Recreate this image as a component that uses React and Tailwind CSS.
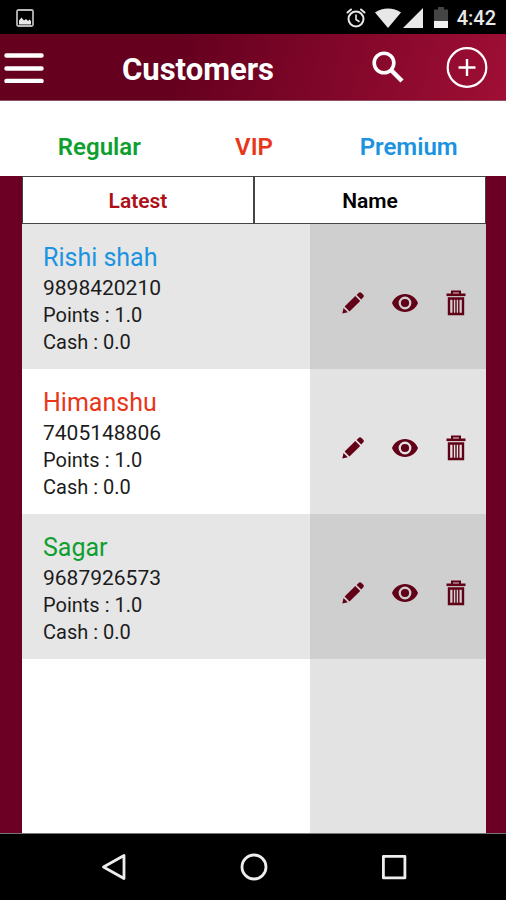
import React from 'react';

const customers = [
  { id: 1, name: 'Rishi shah', phone: '9898420210', points: '1.0', cash: '0.0', type: 'premium' },
  { id: 2, name: 'Himanshu', phone: '7405148806', points: '1.0', cash: '0.0', type: 'vip' },
  { id: 3, name: 'Sagar', phone: '9687926573', points: '1.0', cash: '0.0', type: 'regular' },
];

const typeColors = {
  regular: 'text-[#0f9f30]',
  vip: 'text-[#e8361a]',
  premium: 'text-[#1b93e0]',
};

const StatusBar = () => (
  <div className="flex h-[34px] shrink-0 items-center justify-between bg-black pl-4 pr-[10px] pt-px text-[#e8e8e8]">
    <svg className="h-[18px] w-[18px]" viewBox="0 0 18 18" fill="none">
      <rect x="1" y="1" width="16" height="16" rx="1.5" stroke="#b8b8b8" strokeWidth="1.8" />
      <path d="M3 15.500v-4l2.500-3 2.500 3 2-1.500 2 2 1.500-1.500L15 12v3.500z" fill="#e8e8e8" />
    </svg>
    <div className="flex items-center">
      <svg className="h-5 w-5" viewBox="0 0 20 20" fill="none" stroke="currentColor" strokeLinecap="round">
        <circle cx="10" cy="11" r="7.5" strokeWidth="2" />
        <path d="M1.5 4.5l3.5-3M18.5 4.5l-3.5-3" strokeWidth="2" />
        <path d="M10 7v4.5l3 2" strokeWidth="1.6" />
      </svg>
      <svg className="ml-[9px] h-5 w-[26px]" viewBox="0 0 26 20" fill="currentColor">
        <path d="M0 4.5C7.5-.8 18.5-.8 26 4.5L13 20z" />
      </svg>
      <svg className="ml-[2px] h-5 w-5" viewBox="0 0 20 20" fill="currentColor">
        <path d="M20 0v20H0z" />
      </svg>
      <svg className="ml-[11px] h-[21px] w-[14px]" viewBox="0 0 14 21">
        <path d="M0 2.5h4V0h6v2.5h4V14H0z" fill="#454545" />
        <path d="M0 14h14v7H0z" fill="#f0f0f0" />
      </svg>
      <span className="ml-[9px] text-[20px] leading-6 font-medium">4:42</span>
    </div>
  </div>
);

const Header = () => (
  <header className="flex h-[67px] shrink-0 items-center border-b border-[#8a5560] bg-linear-[105deg] from-[#65001f] from-35% to-[#a00e35] pl-1 pr-[18px] text-white">
    <button type="button" aria-label="Menu">
      <svg className="h-8 w-10" viewBox="0 0 40 32" stroke="currentColor" strokeWidth="4.5" strokeLinecap="round">
        <path d="M2.5 4.500h35M2.5 17.500h35M2.5 30h35" />
      </svg>
    </button>
    <h1 className="ml-[78px] flex-1 pt-[6px] text-[31px] leading-9 font-bold">Customers</h1>
    <button type="button" aria-label="Search">
      <svg className="h-8 w-8" viewBox="0 0 32 32" fill="none" stroke="currentColor">
        <circle cx="12" cy="12" r="9.8" strokeWidth="3.6" />
        <path d="M18.5 18.5L30 30" strokeWidth="4.5" />
      </svg>
    </button>
    <button type="button" aria-label="Add customer" className="ml-[42px]">
      <svg className="h-[42px] w-[42px]" viewBox="0 0 42 42" fill="none" stroke="currentColor">
        <circle cx="21" cy="21.500" r="19.3" strokeWidth="2.2" />
        <path d="M21 13v17M12.5 21.500h17" strokeWidth="2.4" />
      </svg>
    </button>
  </header>
);

const TypeTabs = () => (
  <nav className="flex h-[75px] shrink-0 items-end bg-white pl-[22px] pr-5 pb-[15px] text-[24px] leading-7 font-semibold">
    <button type="button" className={`flex-1 ${typeColors.regular}`}>Regular</button>
    <button type="button" className={`flex-1 ${typeColors.vip}`}>VIP</button>
    <button type="button" className={`flex-1 ${typeColors.premium}`}>Premium</button>
  </nav>
);

const SortTabs = () => (
  <div className="flex h-12 shrink-0 bg-white text-[21px] font-semibold">
    <button type="button" className="flex-1 border border-[#444] pt-1 text-[#ad1018]">Latest</button>
    <button type="button" className="flex-1 border border-[#444] pt-1 text-black">Name</button>
  </div>
);

const EditIcon = () => (
  <svg className="h-[22px] w-[22px]" viewBox="0 0 22 22" fill="currentColor">
    <path d="M.3 21.500l1.200-5.500 4.300 4.300z" />
    <path d="M2.600 14.500L13.300 4.100l4.900 4.900L7.500 19.400z" />
    <path d="M14.600 2.900L16.800.8q1.300-1 2.500 0l2 2q1.200 1.300 0 2.500l-2.100 2.200z" />
  </svg>
);

const ViewIcon = () => (
  <svg className="h-[18px] w-[26px]" viewBox="0 0 26 18" fill="currentColor">
    <path
      fillRule="evenodd"
      d="M13 0C7 0 2.2 3.7 0 9c2.2 5.3 7 9 13 9s10.8-3.7 13-9C23.8 3.7 19 0 13 0zm0 2.6a6.4 6.4 0 1 1 0 12.8 6.4 6.4 0 0 1 0-12.8z"
    />
    <circle cx="13" cy="9" r="4.1" />
  </svg>
);

const DeleteIcon = () => (
  <svg className="h-[26px] w-[20px]" viewBox="0 0 20 26" fill="none" stroke="currentColor">
    <path d="M6 4V1.5h8V4" strokeWidth="2" />
    <path d="M.5 4.8h19" strokeWidth="2.6" />
    <path d="M3 8.5v15.5h14V8.5z" strokeWidth="2.4" />
    <path d="M7.2 8.5v15M10 8.5v15M12.8 8.5v15" strokeWidth="1.4" />
  </svg>
);

const CustomerRow = ({ customer, shaded }) => (
  <li className={`flex h-[145px] ${shaded ? 'bg-[#e6e6e6]' : 'bg-white'}`}>
    <div className="min-w-0 flex-1 pl-[21px] pt-[18px] text-[20px] leading-[27px] text-[#1c1c1c]">
      <h2 className={`mb-px text-[25px] leading-8 ${typeColors[customer.type]}`}>{customer.name}</h2>
      <p className="text-[21px]">{customer.phone}</p>
      <p>Points : {customer.points}</p>
      <p>Cash : {customer.cash}</p>
    </div>
    <div
      className={`flex w-[176px] items-center justify-between pl-8 pr-5 pt-3 text-[#620017] ${
        shaded ? 'bg-[#cfcfcf]' : 'bg-[#e3e3e3]'
      }`}
    >
      <button type="button" aria-label={`Edit ${customer.name}`}><EditIcon /></button>
      <button type="button" aria-label={`View ${customer.name}`}><ViewIcon /></button>
      <button type="button" aria-label={`Delete ${customer.name}`}><DeleteIcon /></button>
    </div>
  </li>
);

const NavigationBar = () => (
  <div className="flex h-[67px] shrink-0 items-center justify-around border-t border-[#777] bg-black pl-11 pr-[42px] text-[#eee]">
    <button type="button" aria-label="Back">
      <svg className="h-7 w-7" viewBox="0 0 28 28" fill="none" stroke="currentColor" strokeWidth="2.8" strokeLinejoin="round">
        <path d="M24 2.5v23L3.5 14z" />
      </svg>
    </button>
    <button type="button" aria-label="Home">
      <svg className="h-7 w-7" viewBox="0 0 28 28" fill="none" stroke="currentColor" strokeWidth="2.8">
        <circle cx="14" cy="14" r="12" />
      </svg>
    </button>
    <button type="button" aria-label="Recent apps">
      <svg className="h-7 w-7" viewBox="0 0 28 28" fill="none" stroke="currentColor" strokeWidth="2.8" strokeLinejoin="round">
        <rect x="3.4" y="3.4" width="21.5" height="21.5" />
      </svg>
    </button>
  </div>
);

const App = () => (
  <div className="flex min-h-screen flex-col bg-[#6c0024] font-[Roboto,sans-serif]">
    <StatusBar />
    <Header />
    <TypeTabs />
    <main className="ml-[22px] mr-5 flex flex-1 flex-col">
      <SortTabs />
      <ul>
        {customers.map((customer, index) => (
          <CustomerRow key={customer.id} customer={customer} shaded={index % 2 === 0} />
        ))}
      </ul>
      <div className="flex flex-1 bg-white">
        <div className="ml-auto w-[176px] bg-[#e3e3e3]" />
      </div>
    </main>
    <NavigationBar />
  </div>
);

export default App;
